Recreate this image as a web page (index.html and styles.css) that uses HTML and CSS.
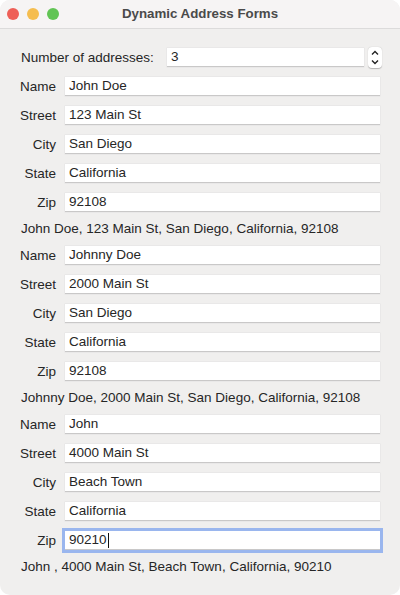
FILE: index.html
```html
<!DOCTYPE html>
<html>
<head>
<meta charset="utf-8">
<link rel="stylesheet" href="styles.css">
</head>
<body>
<div class="window">
  <div class="titlebar">
    <div class="lights">
      <span class="light red"></span>
      <span class="light yellow"></span>
      <span class="light green"></span>
    </div>
    <div class="title">Dynamic Address Forms</div>
  </div>
  <div class="content">
    <div class="count-row">
      <span class="count-label">Number of addresses:</span>
      <div class="field count-field">3</div>
      <div class="stepper">
        <svg width="14" height="21" viewBox="0 0 14 21">
          <path d="M4 7.5 L7 4.5 L10 7.5" fill="none" stroke="#222" stroke-width="1.4"/>
          <path d="M4 13.5 L7 16.5 L10 13.5" fill="none" stroke="#222" stroke-width="1.4"/>
        </svg>
      </div>
    </div>

    <div class="row"><span class="label">Name</span><div class="field">John Doe</div></div>
    <div class="row"><span class="label">Street</span><div class="field">123 Main St</div></div>
    <div class="row"><span class="label">City</span><div class="field">San Diego</div></div>
    <div class="row"><span class="label">State</span><div class="field">California</div></div>
    <div class="row"><span class="label">Zip</span><div class="field">92108</div></div>
    <div class="summary">John Doe, 123 Main St, San Diego, California, 92108</div>

    <div class="row"><span class="label">Name</span><div class="field">Johnny Doe</div></div>
    <div class="row"><span class="label">Street</span><div class="field">2000 Main St</div></div>
    <div class="row"><span class="label">City</span><div class="field">San Diego</div></div>
    <div class="row"><span class="label">State</span><div class="field">California</div></div>
    <div class="row"><span class="label">Zip</span><div class="field">92108</div></div>
    <div class="summary">Johnny Doe, 2000 Main St, San Diego, California, 92108</div>

    <div class="row"><span class="label">Name</span><div class="field">John</div></div>
    <div class="row"><span class="label">Street</span><div class="field">4000 Main St</div></div>
    <div class="row"><span class="label">City</span><div class="field">Beach Town</div></div>
    <div class="row"><span class="label">State</span><div class="field">California</div></div>
    <div class="row"><span class="label">Zip</span><div class="field focused">90210<span class="caret"></span></div></div>
    <div class="summary">John , 4000 Main St, Beach Town, California, 90210</div>
  </div>
</div>
</body>
</html>
```

FILE: styles.css
```css
html, body {
  margin: 0;
  padding: 0;
  background: #ffffff;
}
body {
  font-family: "Liberation Sans", Arial, sans-serif;
  font-size: 13.5px;
  color: #262626;
}
.window {
  width: 400px;
  height: 595px;
  background: #f0efee;
  border-radius: 10px;
  overflow: hidden;
  display: flex;
  flex-direction: column;
}
.titlebar {
  height: 28px;
  background: #f6f4f4;
  border-bottom: 1px solid #dcdbdb;
  display: flex;
  align-items: center;
  position: relative;
  flex-shrink: 0;
}
.lights {
  display: flex;
  gap: 8px;
  padding-left: 7px;
}
.light {
  width: 12px;
  height: 12px;
  border-radius: 50%;
  display: block;
}
.red { background: #ee5f57; }
.yellow { background: #f5bd4f; }
.green { background: #61c454; }
.title {
  position: absolute;
  left: 0;
  right: 0;
  top: 0;
  line-height: 28px;
  text-align: center;
  font-weight: bold;
  font-size: 13.3px;
  color: #4a4a4a;
  pointer-events: none;
}
.content {
  padding: 14px 20px 0 20px;
  display: flex;
  flex-direction: column;
}
.count-row {
  height: 29px;
  display: flex;
  align-items: center;
}
.count-label {
  width: 146px;
  padding-left: 1px;
  flex-shrink: 0;
  white-space: nowrap;
}
.field {
  height: 19px;
  line-height: 20px;
  background: #ffffff;
  border-bottom: 1px solid #c9c8c8;
  box-shadow: 0 0 0 0.5px #e2e1e1;
  padding-left: 4px;
  box-sizing: border-box;
  flex: 1;
  white-space: nowrap;
  display: flex;
  align-items: center;
}
.count-field {
  flex: 0 0 197px;
  height: 19px;
}
.stepper {
  width: 14px;
  height: 21px;
  margin-left: 4px;
  background: #ffffff;
  border-radius: 4px;
  box-shadow: 0 0.5px 1px rgba(0,0,0,0.25);
  display: flex;
}
.row {
  height: 29px;
  display: flex;
  align-items: center;
}
.label {
  width: 36px;
  text-align: right;
  margin-right: 9px;
  flex-shrink: 0;
  white-space: nowrap;
}
.summary {
  height: 24px;
  line-height: 24px;
  padding-left: 1px;
  white-space: nowrap;
}
.focused {
  outline: 3px solid #9ab6ee;
  outline-offset: 0;
  border-bottom: 1px solid #c9c8c8;
}
.caret {
  display: inline-block;
  width: 1px;
  height: 15px;
  background: #111;
  margin-left: 1px;
}
```
